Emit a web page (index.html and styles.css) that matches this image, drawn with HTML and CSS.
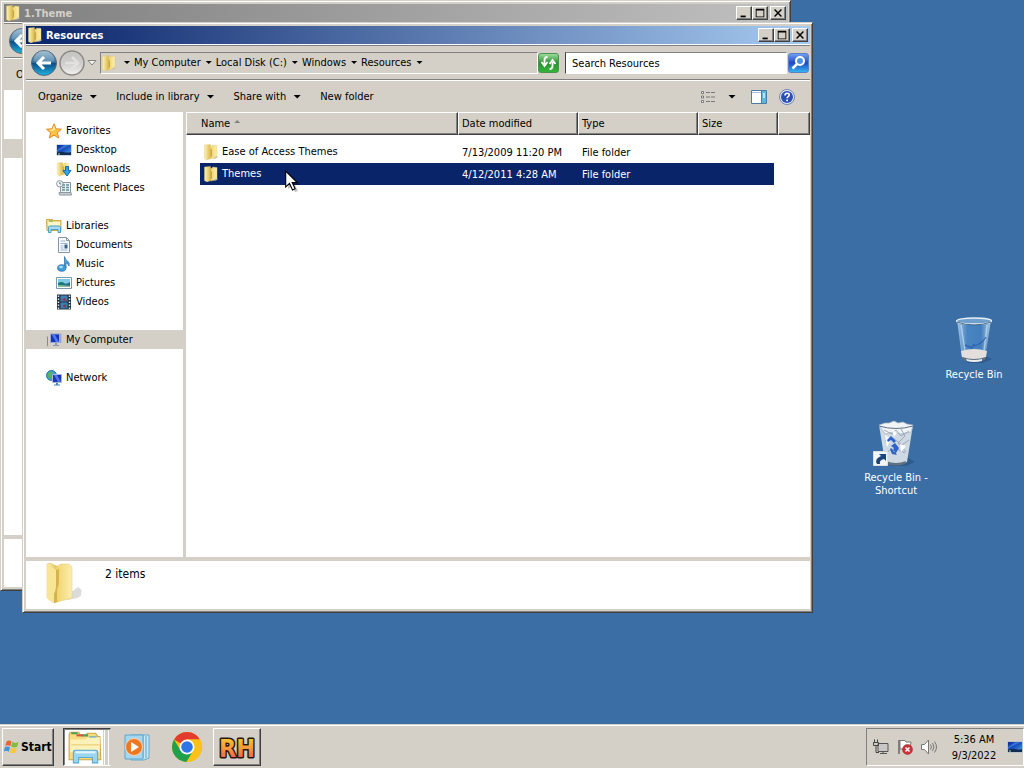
FILE: index.html
```html
<!DOCTYPE html>
<html lang="en">
<head>
<meta charset="utf-8">
<title>Desktop</title>
<link rel="stylesheet" href="styles.css">
</head>
<body>
<svg class="defs" aria-hidden="true">
  <defs>
    <linearGradient id="gFold" x1="0" x2="1"><stop offset="0" stop-color="#fdf3b4"/><stop offset="1" stop-color="#dcb94c"/></linearGradient>
    <linearGradient id="gFoldB" x1="0" x2="1"><stop offset="0" stop-color="#f1d36c"/><stop offset="1" stop-color="#fbeeb0"/></linearGradient>
    <linearGradient id="gBack" x1="0" x2="0" y1="0" y2="1"><stop offset="0" stop-color="#8fb3c9"/><stop offset=".48" stop-color="#2f6f9c"/><stop offset=".5" stop-color="#0a4a80"/><stop offset="1" stop-color="#21b4e6"/></linearGradient>
    <linearGradient id="gFwd" x1="0" x2="0" y1="0" y2="1"><stop offset="0" stop-color="#c4c4c2"/><stop offset=".5" stop-color="#cfcdca"/><stop offset="1" stop-color="#f2f1ef"/></linearGradient>
    <linearGradient id="gScr" x1="0" x2="1" y1="0" y2="1"><stop offset="0" stop-color="#0b2f9c"/><stop offset=".5" stop-color="#1a55c4"/><stop offset="1" stop-color="#5ba4ee"/></linearGradient>
    <linearGradient id="gBin" x1="0" x2="1"><stop offset="0" stop-color="#a9cdea"/><stop offset=".3" stop-color="#4b87c6"/><stop offset=".7" stop-color="#4480c0"/><stop offset="1" stop-color="#b4d3ec"/></linearGradient>
    <linearGradient id="gRh" x1="0" x2="0" y1="0" y2="1"><stop offset=".15" stop-color="#f4c530"/><stop offset=".5" stop-color="#f19a38"/><stop offset=".85" stop-color="#ee5f50"/></linearGradient>
    <symbol id="folder" viewBox="0 0 16 16"><path d="M1.500 1l6-.5v14L4 16l-2.500-1.500z" fill="url(#gFold)" stroke="#dcc56c" stroke-width=".4"/><path d="M7.500 2.500l2-.5V1l4.500.5v12l-6.500 1.500z" fill="url(#gFoldB)" stroke="#dcc56c" stroke-width=".4"/><path d="M7.500 4v10l1.500-2V6z" fill="#c6a640"/><path d="M13 12l2 1-2 1.500-3 .5z" fill="#bbb" opacity=".7"/></symbol>
    <symbol id="monitor" viewBox="0 0 16 16"><path d="M.5 2.500h15v11H.5z" fill="#9fb6cd"/><path d="M1 3h14v10H1z" fill="url(#gScr)"/><path d="M1 11c4-3 9 1 14-1v3H1z" fill="#122c57"/><path d="M1 8l7-5h5C9 6 5 7 1 10z" fill="#5798ea" opacity=".5"/><path d="M2 12h2" stroke="#a6dc8c"/></symbol>
    <symbol id="back" viewBox="0 0 26 26"><circle cx="13" cy="13" r="12.500" fill="url(#gBack)" stroke="#52677a"/><path d="M2.500 11a10.500 10.500 0 0 1 21 0q-10 3-21 0z" fill="#fff" opacity=".2"/><path d="M20 13H8M13 7l-6 6 6 6" fill="none" stroke="#fff" stroke-width="3"/></symbol>
    <symbol id="fwd" viewBox="0 0 26 26"><circle cx="13" cy="13" r="12" fill="url(#gFwd)" stroke="#8c8a88" stroke-width="1.500"/><path d="M6 13h12M13 7l6 6-6 6" fill="none" stroke="#e2e1df" stroke-width="2.500"/></symbol>
  </defs>
</svg>

<main class="desktop">
  <section class="window window-back" aria-label="1.Theme">
    <header class="titlebar inactive">
      <svg class="i16"><use href="#folder"/></svg><h2>1.Theme</h2>
      <div class="caps"><button type="button" class="cap" aria-label="Minimize"><svg viewBox="0 0 16 14"><path d="M4 10h6v2H4z"/></svg></button><button type="button" class="cap" aria-label="Maximize"><svg viewBox="0 0 16 14"><path d="M3 2h10v10H3zM4 4v7h8V4z" fill-rule="evenodd"/></svg></button><button type="button" class="cap cap-close" aria-label="Close"><svg viewBox="0 0 16 14"><path d="M4 3l8 8M12 3l-8 8" stroke="#000" stroke-width="1.700"/></svg></button></div>
    </header>
    <div class="navbar"><button type="button" class="nav" aria-label="Back"><svg class="i26"><use href="#back"/></svg></button></div>
    <div class="commands"><button type="button" class="cmd">Organize</button></div>
    <div class="content"><nav class="tree tree-back"><div class="row selected"></div></nav></div>
    <footer class="details"></footer>
  </section>

  <section class="window window-front" aria-label="Resources">
    <header class="titlebar">
      <svg class="i16"><use href="#folder"/></svg><h1>Resources</h1>
      <div class="caps"><button type="button" class="cap" aria-label="Minimize"><svg viewBox="0 0 16 14"><path d="M4 10h6v2H4z"/></svg></button><button type="button" class="cap" aria-label="Maximize"><svg viewBox="0 0 16 14"><path d="M3 2h10v10H3zM4 4v7h8V4z" fill-rule="evenodd"/></svg></button><button type="button" class="cap cap-close" aria-label="Close"><svg viewBox="0 0 16 14"><path d="M4 3l8 8M12 3l-8 8" stroke="#000" stroke-width="1.700"/></svg></button></div>
    </header>
    <div class="navbar">
      <button type="button" class="nav" aria-label="Back"><svg class="i26"><use href="#back"/></svg></button>
      <button type="button" class="nav" aria-label="Forward"><svg class="i26"><use href="#fwd"/></svg></button>
      <button type="button" class="nav recent" aria-label="Recent pages"><svg viewBox="0 0 10 6"><path d="M1 .5h8L5 5z" fill="#f4f3f1" stroke="#85827d"/></svg></button>
      <div class="address">
        <svg class="i16"><use href="#folder"/></svg>
        <i class="tri"></i><a href="#">My Computer</a><i class="tri"></i><a href="#">Local Disk (C:)</a><i class="tri"></i><a href="#">Windows</a><i class="tri"></i><a href="#">Resources</a><i class="tri"></i>
        <button type="button" class="drop" aria-label="Previous locations"><i class="tri big"></i></button>
      </div>
      <button type="button" class="go refresh" aria-label="Refresh"><svg viewBox="0 0 18 18"><path d="M8 3q-3 0-3 3v4M2 8l3 4 3-4M10 15q3 0 3-3V8M10 10l3-4 3 4" fill="none" stroke="#fff" stroke-width="1.800"/></svg></button>
      <div class="search">
        <input type="text" aria-label="Search Resources" value="Search Resources">
        <button type="button" class="go find" aria-label="Search"><svg viewBox="0 0 18 18"><circle cx="10.500" cy="7" r="4" fill="#4f92e8" stroke="#fff" stroke-width="2"/><path d="M7.500 10L3 14.500" stroke="#fff" stroke-width="2.500"/></svg></button>
      </div>
    </div>
    <div class="commands">
      <button type="button" class="cmd">Organize<i class="tri big"></i></button>
      <button type="button" class="cmd">Include in library<i class="tri big"></i></button>
      <button type="button" class="cmd">Share with<i class="tri big"></i></button>
      <button type="button" class="cmd">New folder</button>
      <div class="views">
        <button type="button" aria-label="Change your view"><svg class="i16" viewBox="0 0 16 16"><path d="M1.500 2.500h2v2h-2zM1.500 7h2v2h-2zM1.500 11.500h2v2h-2z" fill="#fff" stroke="#777"/><path d="M6 3.500h10M6 8h10M6 12.500h10" stroke="#777" stroke-dasharray="4 1"/></svg></button>
        <button type="button" aria-label="More options"><i class="tri big"></i></button>
        <button type="button" class="pane" aria-label="Show the preview pane"><svg class="i16" viewBox="0 0 16 16"><path d="M.5 1.500h15v13H.5z" fill="#fff" stroke="#4c7ca6"/><path d="M1 3.500h9" stroke="#a8c3dc"/><path d="M10 2h5v12h-5z" fill="#5bb7de"/><path d="M10.500 2v12" stroke="#4c7ca6"/><path d="M12 4h2v5h-2z" fill="#b7e3f3"/></svg></button>
        <button type="button" aria-label="Get help"><svg class="i16" viewBox="0 0 16 16"><circle cx="8" cy="8" r="7.500" fill="#e4eafa" stroke="#7284b0"/><circle cx="8" cy="8" r="6" fill="#2c4fb4"/><path d="M6 6.500q0-2.300 2.100-2.300T10.200 6q0 1-1 1.600T8.100 9.300M8.100 10.500v1.700" fill="none" stroke="#fff" stroke-width="1.600"/></svg></button>
      </div>
    </div>
    <div class="content">
      <nav class="tree" aria-label="Folders">
        <div class="group">
          <a href="#" class="row"><svg class="i16" viewBox="0 0 16 16"><path d="M8 .8l2.100 5 5.400.4-4.100 3.500 1.300 5.300L8 12.200 3.300 15l1.300-5.300L.5 6.200l5.400-.4z" fill="#fdc244" stroke="#e58b25"/><path d="M8 2.500l1.300 4L6 8 3 7l3.500-.5z" fill="#fff0a6"/></svg>Favorites</a>
          <a href="#" class="row child"><svg class="i16"><use href="#monitor"/></svg>Desktop</a>
          <a href="#" class="row child"><svg class="i16" viewBox="0 0 16 16"><use href="#folder" width="14" height="16"/><path d="M9.500 5.500h3v4H15L11 15 7 9.500h2.500z" fill="#36a0e6" stroke="#176bb4"/></svg>Downloads</a>
          <a href="#" class="row child"><svg class="i16" viewBox="0 0 16 16"><path d="M4.500 2.500h10v10h-10z" fill="#eef2f4" stroke="#8a979f"/><path d="M6 5h3M10 5h3M6 7.500h3M10 7.500h3M6 10h3M10 10h3" stroke="#668a9b" stroke-width="1.300"/><path d="M3 12.500h12l.5 2.500h-12z" fill="#c8d0d4" stroke="#8a979f"/><circle cx="3.800" cy="3.800" r="3.200" fill="#f8fafb" stroke="#8a979f"/><path d="M3.800 2v2h1.500" fill="none" stroke="#577"/></svg>Recent Places</a>
        </div>
        <div class="group">
          <a href="#" class="row"><svg class="i16" viewBox="0 0 16 16"><path d="M.5 3V1.500h6l1 1h7.500v10H1z" fill="#f5dd83" stroke="#cda84a"/><path d="M2 4h12v4H2z" fill="#fff6c8"/><path d="M3 3h4" stroke="#56a05c"/><path d="M2.500 14.500v-5q0-1.500 1.500-1.500h9q1.500 0 1.500 1.500v5H12v-3H5v3z" fill="#a6dbf3" stroke="#4b9ec6"/></svg>Libraries</a>
          <a href="#" class="row child"><svg class="i16" viewBox="0 0 16 16"><path d="M2.500.5h8l3 3v12h-11z" fill="#fbfcfd" stroke="#8695a3"/><path d="M10.500.5v3h3" fill="none" stroke="#8695a3"/><path d="M4.500 4h5M4.500 6.500h7M4.500 9h3M4.500 11h3M4.500 13h7" stroke="#92b4d4"/><path d="M8.500 7.500h3v4h-3z" fill="#395f87"/></svg>Documents</a>
          <a href="#" class="row child"><svg class="i16" viewBox="0 0 16 16"><path d="M8.500 12V.5q.5 3 3 4.500t1.500 5q-.5-2.500-3-3v5" fill="#4fa3dc" stroke="#2c6aa5" stroke-width=".7"/><ellipse cx="5.800" cy="12" rx="4.200" ry="3.300" fill="#399dde" stroke="#2968a3" stroke-width=".7"/><ellipse cx="5" cy="11" rx="2" ry="1.200" fill="#a4dcfa"/></svg>Music</a>
          <a href="#" class="row child"><svg class="i16" viewBox="0 0 16 16"><path d="M.5 2.500h15v11H.5z" fill="#fff" stroke="#7d98ac"/><path d="M2 4h12v8H2z" fill="#80cbe6"/><path d="M2 8q4-2 6 0t6-1v5H2z" fill="#21747d"/><path d="M2 10q5 0 12 1v1H2z" fill="#86be9c"/></svg>Pictures</a>
          <a href="#" class="row child"><svg class="i16" viewBox="0 0 16 16"><path d="M1 .5h14v15H1z" fill="#20303d"/><path d="M2.500 1.500v14M13.500 1.500v14" stroke="#d7e5ee" stroke-width="1.500" stroke-dasharray="1.500 1.500"/><path d="M4.500 1.500h7v6h-7zM4.500 8.500h7v6h-7z" fill="#437fb5"/><path d="M5 6l4-2 2 3zM6 12l4-2v4z" fill="#8a354f"/></svg>Videos</a>
        </div>
        <div class="group">
          <a href="#" class="row selected"><svg class="i16" viewBox="0 0 16 16"><path d="M1.500 5v9" stroke="#888"/><path d="M.5 4.500h1M.5 14h2" stroke="#aaa"/><path d="M4 1.500h11.500v9.500H4z" fill="#9ba8d2"/><path d="M5 2.500h8v7.500H5z" fill="#1635b5"/><path d="M6 3h3l4 7h-3z" fill="#4d7ceb"/><path d="M9 11h2v2h2v1H7v-1h2z" fill="#8b94a8"/></svg>My Computer</a>
        </div>
        <div class="group">
          <a href="#" class="row"><svg class="i16" viewBox="0 0 16 16"><circle cx="5.500" cy="5.500" r="5" fill="#3c9edb" stroke="#2a75a9"/><path d="M2 3q3-3 5 0l-2 2 1 4Q1 9 2 3z" fill="#51b562"/><path d="M6.500 4.500h9v8h-9z" fill="#1938b7" stroke="#aab7dd"/><path d="M8 5h3l4 7h-3z" fill="#4f78e6"/><path d="M10 13h2v1.500h2v1H8v-1h2z" fill="#4588bb"/></svg>Network</a>
        </div>
      </nav>
      <div class="list">
        <table>
          <colgroup><col class="c-name"><col class="c-date"><col class="c-type"><col class="c-size"><col></colgroup>
          <thead><tr><th class="first">Name<i class="sort"></i></th><th>Date modified</th><th>Type</th><th>Size</th><th></th></tr></thead>
          <tbody>
            <tr class="lead"><td><div class="name"><svg class="i16"><use href="#folder"/></svg>Ease of Access Themes</div></td><td>7/13/2009 11:20 PM</td><td>File folder</td><td class="size"></td><td></td></tr>
            <tr class="on"><td><div class="name"><svg class="i16"><use href="#folder"/></svg>Themes</div></td><td>4/12/2011 4:28 AM</td><td>File folder</td><td class="size"></td><td></td></tr>
          </tbody>
        </table>
      </div>
    </div>
    <footer class="details">
      <svg class="bigfolder" viewBox="0 0 40 44"><path d="M26 32l8-6q5 3 3 6 2 4-8 6l-6 1z" fill="#999" opacity=".35"/><path d="M3 3l3-1 9 4v34l-5 2-7-5z" fill="url(#gFold)" stroke="#d9bd5f" stroke-width=".5"/><path d="M12 6l5-3h8l3 3v31l-15 4z" fill="url(#gFoldB)" stroke="#e0c873" stroke-width=".5"/><path d="M3 3l9 6v15q0 6-2 9v9l-7-5z" fill="#f8e695"/><path d="M12 9v15q0 6-2 9v9l3-1V28q2-3 2-8V8z" fill="#d0ac46" opacity=".8"/></svg>
      <span>2 items</span>
    </footer>
  </section>

  <a href="#" class="shortcut bin-empty">
    <svg viewBox="0 0 48 48"><path d="M14 42l20-4 8 4-9 4H18z" fill="#1f426b" opacity=".4"/><path d="M7 3l5 38q12 6 23 0l6-38z" fill="url(#gBin)" opacity=".9"/><path d="M11 34q13-4 26 0l-1 6q-12 5-24 0z" fill="#e4dedd"/><path d="M12 40q12 4 24 0l-1 3q-11 4-22 0z" fill="#5d7082"/><path d="M16 42q8 2 16 0v2q-8 2-15 0z" fill="#e8eef2"/><path d="M11 8l4 26M37 8l-3 26" stroke="#d7e8f5" stroke-width="1.500" opacity=".6"/><path d="M15 28l7 3 2-4M24 29q8-2 12-9" fill="none" stroke="#2459ad" stroke-width="1.500" opacity=".7"/><ellipse cx="24" cy="4" rx="17.500" ry="3" fill="#6f9fcd" stroke="#e5eff6" stroke-width="1.300"/><path d="M7 5q17 6 34 0" fill="none" stroke="#496985"/></svg>
    <span>Recycle Bin</span>
  </a>
  <a href="#" class="shortcut bin-full">
    <svg viewBox="0 0 48 48"><path d="M15 43l20-6 8 5-9 4H18z" fill="#1f426b" opacity=".4"/><path d="M7 5l6 37q11 5 22 0l6-37z" fill="#ced9e3"/><path d="M7 5l6-2 4 0 5-2 4 2 5-1 4 2 6 1-2 7-10 2-8-2-8 2z" fill="#f2f5f7" stroke="#a7b3bf" stroke-width=".7"/><path d="M12 10l8 4 4-4 5 6 8-5M13 21l8-3 9 7 7-5M15 32l8-4 10 5M29 9l4 7-7 7 8 9" fill="none" stroke="#95a3b0" stroke-width=".9"/><path d="M13 15l6 4-4 8zM28 24l6 2-5 6zM20 10l5 3-3 4z" fill="#fff"/><path d="M15 20l4-4 5 5-2 2-3-3-3 2zM19 26l4-3 4 5-3 5-3-2 1-3zM18 29l2 5 5 1-2-3-4-4z" fill="#2d62cb"/><path d="M7 6q17 5 34 0" fill="none" stroke="#5e7286"/><path d="M14 41q10 4 20 0l-1 3q-9 3-18 0z" fill="#627180"/><path d="M1.500 31.500h14v14h-14z" fill="#f3f6f8" stroke="#d9dfe3"/><path d="M5 44q-3-5 4-8l-2-2h7v7l-2-2q-5 1-4 5z" fill="#18477d"/></svg>
    <span>Recycle Bin - Shortcut</span>
  </a>

  <svg class="cursor" viewBox="0 0 15 23" aria-hidden="true"><path d="M3 3v16l4-3 3 6 3-1-3-6h5z" opacity=".25"/><path d="M.7 1v16l3.800-3.600 3 6.600 2.600-1.200-2.900-6.300h5z" fill="#fff" stroke="#000" stroke-width="1.100"/></svg>
</main>

<footer class="taskbar">
  <button type="button" class="start"><svg viewBox="0 0 16 16"><path d="M2.500 2.500q3-2 5 0L6.300 7.300q-2.500-1.700-5-.3z" fill="#ec6236"/><path d="M8.300 2.800q3 2 6.200.3l-1.300 4.700q-3 1.500-6-.3z" fill="#82bd40"/><path d="M1 8q3-1.300 5 .3l-1.200 4.500q-2.400-1.800-5-.3z" fill="#4293d8"/><path d="M6.900 8.600q3 1.800 6 .3l-1.200 4.600q-3 1.500-6-.3z" fill="#f6c83b"/></svg>Start</button>
  <button type="button" class="task stack" aria-label="Windows Explorer"><svg viewBox="0 0 34 34"><path d="M2 29V5l1-2h8l2 3h5l1-2h8l2 3h2l1 22z" fill="#f6dc7e" stroke="#c9a647"/><path d="M4 4h6M14 6h6" stroke="#4aa054" stroke-width="2"/><path d="M21 8h7" stroke="#4599d6" stroke-width="2"/><path d="M9 6h6" stroke="#d65344" stroke-width="2"/><path d="M3 10h14l2-2h12v14H3z" fill="#fdf1ba"/><path d="M4 15h27" stroke="#e8cc6f"/><path d="M6 32V22q0-2 2-2h19q2 0 2 2v10h-5v-5H11v5z" fill="#9bd5f0" stroke="#5aaad0"/><path d="M8 22h19" stroke="#e2f5fd" stroke-width="2"/></svg></button>
  <button type="button" class="launch" aria-label="Windows Media Player"><svg viewBox="0 0 32 32"><path d="M10 4h18v23l-5 2H10z" fill="#c9e8f7" stroke="#64aad0"/><path d="M25 5v22M22 4v23" stroke="#5ca5cf"/><path d="M4 4h18v24H4z" fill="#a5d6ee" stroke="#5ca5cf"/><circle cx="13" cy="16" r="8.500" fill="#ee7820" stroke="#fbd5b4"/><path d="M10 11l8 5-8 5z" fill="#fff"/></svg></button>
  <button type="button" class="launch" aria-label="Google Chrome"><svg viewBox="0 0 32 32"><circle cx="16" cy="16" r="15" fill="#fbc116"/><path d="M16 16L3 8.500A15 15 0 0 1 29 8.500H16z" fill="#e33b2e"/><path d="M3 8.500A15 15 0 0 0 15.500 31L22.500 19.500 16 16 9.500 19.500z" fill="#21a04b"/><path d="M16 8.500h13A15 15 0 0 1 15.500 31l7-11.500z" fill="#fbc116"/><circle cx="16" cy="16" r="7.500" fill="#fff"/><circle cx="16" cy="16" r="5.800" fill="#3075e8"/></svg></button>
  <button type="button" class="task rh" aria-label="RH"><svg viewBox="0 0 40 36"><text x="20" y="28" text-anchor="middle" class="rh-text">RH</text></svg></button>
  <div class="tray">
    <svg class="i16" viewBox="0 0 16 16"><path d="M5 4.500h10v8H5z" fill="#c9c7c3" stroke="#555"/><path d="M7 14.500h7M10 12.500v2" stroke="#555"/><path d="M1.500.5v3M4.500.5v3M.5 3.500h5v3h-5zM3 6.500v7h3" fill="none" stroke="#444"/></svg>
    <svg class="i16" viewBox="0 0 16 16"><path d="M2 1v14" stroke="#666" stroke-width="1.500"/><path d="M3 1.500h5l1 1.500h5l-1 7H3z" fill="#fff" stroke="#777"/><circle cx="10.500" cy="10.500" r="5" fill="#ce3038" stroke="#9f2027" stroke-width=".5"/><path d="M8.500 8.500l4 4M12.500 8.500l-4 4" stroke="#fff" stroke-width="1.500"/></svg>
    <svg class="i16" viewBox="0 0 16 16"><path d="M.5 5.500h3L7.500 1v14l-4-4.500h-3z" fill="#fff" stroke="#777"/><path d="M9.500 5.500q2 2.500 0 5M11.500 4q3 4 0 8M13.500 2.500q4 5.500 0 11" fill="none" stroke="#777"/></svg>
    <div class="clock"><time>5:36 AM</time><time>9/3/2022</time></div>
    <button type="button" class="show" aria-label="Show desktop"><svg class="i16"><use href="#monitor"/></svg></button>
  </div>
</footer>
</body>
</html>
```

FILE: styles.css
```css
* { box-sizing: border-box; }
html, body { height: 100%; }
body {
  margin: 0;
  display: flex;
  flex-direction: column;
  overflow: hidden;
  background: #3a6ea5;
  color: #000;
  font: 11px/14px Tahoma, "DejaVu Sans Condensed", "DejaVu Sans", sans-serif;
}
button, input { font: inherit; color: inherit; margin: 0; }
button { background: none; border: 0; padding: 0; }
a { color: inherit; text-decoration: none; }
svg { display: block; flex: none; }
.defs { position: absolute; width: 0; height: 0; }
.i16 { width: 16px; height: 16px; }
.i26 { width: 26px; height: 26px; }

.desktop { position: relative; flex: 1; min-height: 0; }

/* Windows */
.window {
  position: absolute;
  display: flex;
  flex-direction: column;
  padding: 3px 2px 3px 3px;
  background: #d4d0c8;
  border: 1px solid;
  border-color: #d4d0c8 #404040 #404040 #d4d0c8;
  box-shadow: inset 1px 1px #fff, inset -1px -1px #808080;
}
.window-back { inset: 0 233px 133px 0; }
.window-front { inset: 22px 211px 111px 22px; }

.titlebar {
  display: flex;
  align-items: center;
  gap: 3px;
  height: 18px;
  padding: 0 2px 0 1px;
  background: linear-gradient(90deg, #0a246a, #a6caf0);
  color: #fff;
}
.titlebar.inactive { background: linear-gradient(90deg, #808080, #c0c0c0); color: #d4d0c8; }
.titlebar h1, .titlebar h2 { flex: 1; margin: 0; padding-top: 1px; font-size: 11px; line-height: 14px; }
.caps { display: flex; }
.cap, .start, .task {
  background: #d4d0c8;
  border: 1px solid;
  border-color: #fff #404040 #404040 #fff;
  box-shadow: inset -1px -1px #808080;
}
.cap { width: 16px; height: 14px; }
.cap svg { width: 14px; height: 12px; }
.cap-close { margin-left: 2px; }

.navbar {
  display: flex;
  align-items: center;
  height: 35px;
  margin-top: 1px;
  padding: 0 1px 0 5px;
  border-top: 1px solid #808080;
  border-bottom: 1px solid #808080;
  box-shadow: 0 -1px #fff, 0 1px #fff;
}
.nav { margin-right: 2px; }
.recent { margin-right: 3px; }
.recent svg { width: 10px; height: 6px; }
.address {
  flex: 1;
  display: flex;
  align-items: center;
  height: 22px;
  border: 1px solid;
  border-color: #808080 #fff #fff #808080;
}
.address .i16 { margin-right: 2px; }
.tri {
  width: 18px;
  height: 3px;
  background: #000;
  clip-path: polygon(6px 0, 12px 0, 9px 3px);
}
.tri.big { height: 4px; clip-path: polygon(5px 0, 13px 0, 9px 4px); }
.address .tri { flex: none; }
.address > .tri { width: 15px; clip-path: polygon(5px 0, 11px 0, 8px 3px); }
.drop { margin-left: auto; padding: 4px; }
.go {
  width: 21px;
  height: 20px;
  border-radius: 3px;
}
.go svg { width: 19px; height: 18px; margin: auto; }
.refresh { background: linear-gradient(#9cdc9c, #27912f 50%, #35b43c); border: 1px solid #4a9250; }
.find { background: linear-gradient(#6f9ef0, #1d49c4 50%, #35b4f0); border: 1px solid #5b7fc4; }
.search {
  display: flex;
  align-items: center;
  width: 244px;
  margin-left: 6px;
  gap: 1px;
}
.search input {
  flex: 1;
  min-width: 0;
  height: 22px;
  padding: 1px 6px 0;
  background: #fff;
  border: 1px solid;
  border-color: #808080 #fff #fff #404040;
  border-radius: 0;
  outline: 0;
}

.commands {
  display: flex;
  align-items: center;
  height: 32px;
  padding: 1px 15px 0 12px;
}
.cmd { display: flex; align-items: center; margin-right: 14px; }
.cmd .tri { margin-left: 2px; }
.views { display: flex; align-items: center; margin-left: auto; gap: 7px; }
.views button { display: flex; }
.views .pane { margin: 0 5px 0 3px; }

.content { flex: 1; display: flex; min-height: 0; }
.tree {
  display: flex;
  flex-direction: column;
  gap: 19px;
  width: 157px;
  margin-right: 3px;
  padding-top: 9px;
  background: #fff;
}
.tree-back { padding-top: 49px; }
.row { display: flex; align-items: center; gap: 4px; height: 19px; padding-left: 20px; }
.row.child { padding-left: 30px; }
.row.selected { background: #d4d0c8; }
.list { flex: 1; background: #fff; overflow: hidden; }

table { width: 100%; table-layout: fixed; border-collapse: separate; border-spacing: 0; }
.c-name { width: 272px; }
.c-date, .c-type { width: 120px; }
.c-size { width: 80px; }
th {
  height: 23px;
  padding: 1px 3px 0;
  background: #d4d0c8;
  border: 1px solid;
  border-color: #fff #404040 #404040 #fff;
  box-shadow: inset -1px -1px #808080;
  font-weight: normal;
  text-align: left;
}
th.first { padding-left: 14px; }
.sort {
  display: inline-block;
  width: 6px;
  height: 3px;
  margin: 0 0 4px 4px;
  background: #808080;
  clip-path: polygon(50% 0, 100% 100%, 0 100%);
}
td { height: 22px; padding: 1px 0 0 4px; }
td:first-child { padding: 0 0 0 14px; }
.lead td { height: 28px; padding-top: 7px; }
.lead td:first-child { padding-top: 6px; }
.name { display: flex; align-items: center; gap: 3px; height: 22px; padding-left: 3px; }
.on { color: #fff; }
.on td:not(:last-child) { background: #0a246a; }
.on td:first-child { background-clip: content-box; }
.on td.size { border-right: 4px solid #fff; }

.details {
  display: flex;
  align-items: flex-start;
  height: 48px;
  margin-top: 4px;
  padding-left: 18px;
  background: #fff;
  font-size: 12px;
  line-height: 14px;
}
.bigfolder { width: 40px; height: 44px; }
.details span { margin: 6px 0 0 21px; }

/* Desktop icons */
.shortcut {
  position: absolute;
  display: flex;
  flex-direction: column;
  align-items: center;
  width: 76px;
  gap: 3px;
  color: #fff;
  line-height: 13px;
  text-align: center;
}
.shortcut svg { width: 48px; height: 48px; }
.bin-empty { right: 12px; top: 317px; }
.bin-full { right: 90px; top: 420px; }
.cursor { position: absolute; left: 285px; top: 170px; width: 15px; height: 23px; }

/* Taskbar */
.taskbar {
  display: flex;
  align-items: center;
  height: 44px;
  padding: 2px 0 0 2px;
  background: #d4d0c8;
  box-shadow: inset 0 1px #d4d0c8, inset 0 2px #fff;
}
.start {
  display: flex;
  align-items: center;
  gap: 1px;
  width: 52px;
  height: 38px;
  padding-left: 1px;
  font-weight: bold;
  font-size: 12px;
}
.start svg { width: 16px; height: 16px; }
.task { display: flex; align-items: center; justify-content: center; width: 48px; height: 38px; }
.task svg { width: 36px; height: 36px; }
.stack {
  width: 48px;
  margin: 0 10px 0 9px;
  padding-right: 5px;
  background: linear-gradient(90deg, #fff 39px, #d4d0c8 39px, #d4d0c8 40px, #fff 40px, #fff 41px, #d4d0c8 41px, #d4d0c8 44px, #fff 44px, #fff 45px, #d4d0c8 45px);
  border-color: #404040 #d4d0c8 #fff #404040;
  box-shadow: inset 1px 1px #808080;
}
.launch { margin-right: 18px; }
.launch svg { width: 32px; height: 32px; }
.rh { margin-left: -8px; }
.task.rh svg { width: 40px; }
.rh-text {
  font: bold 25px "DejaVu Sans Condensed", sans-serif;
  fill: url(#gRh);
  stroke: #2c1508;
  stroke-width: 3px;
  stroke-linejoin: round;
  paint-order: stroke;
}
.tray {
  display: flex;
  align-items: center;
  gap: 8px;
  height: 38px;
  margin-left: auto;
  padding-left: 6px;
  border: 1px solid;
  border-color: #808080 #fff #fff #808080;
}
.clock { display: flex; flex-direction: column; width: 58px; padding-top: 1px; text-align: center; line-height: 16px; }
.show { margin-left: -4px; }
```
